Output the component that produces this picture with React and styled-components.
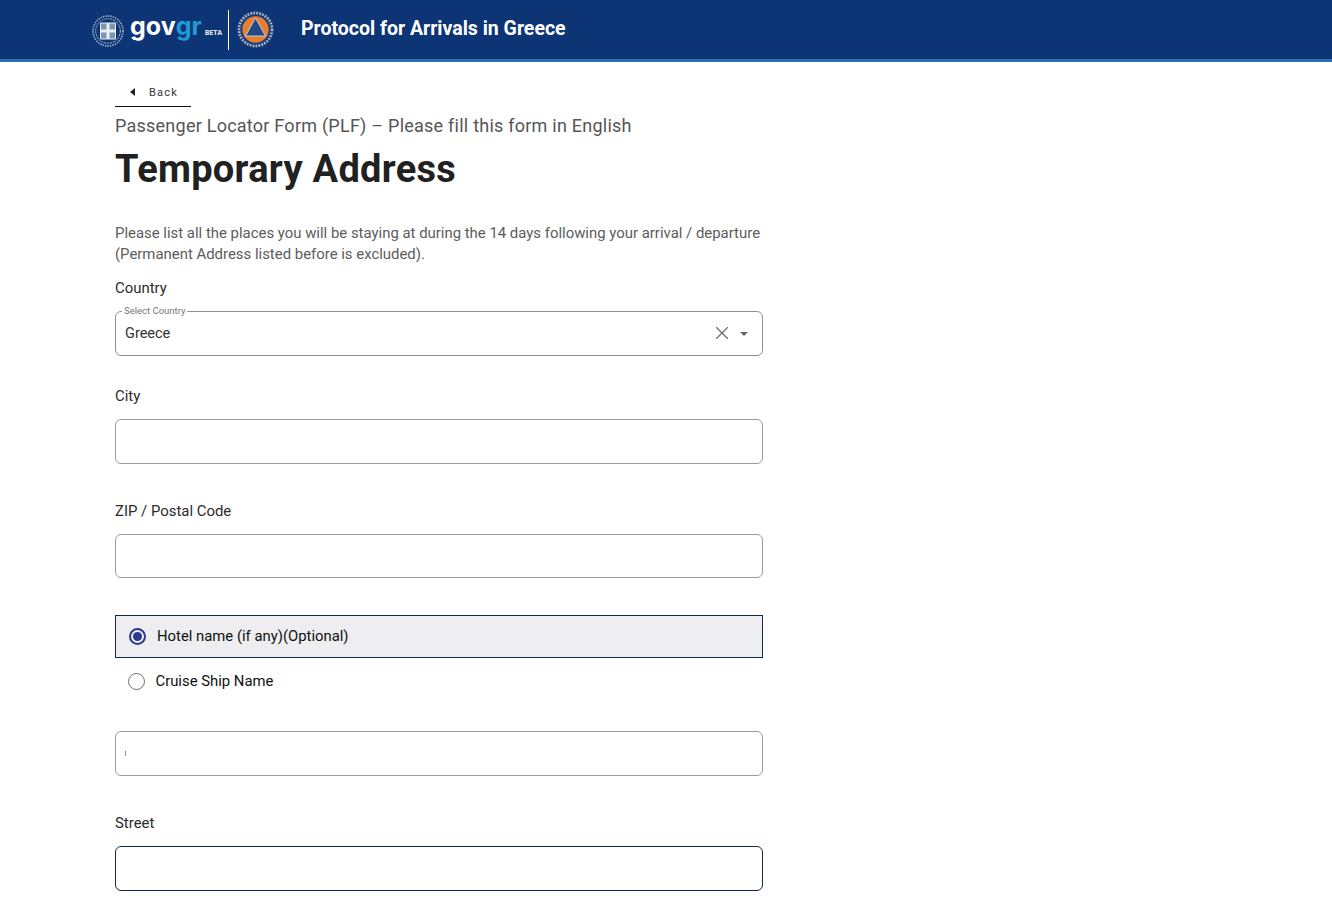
import React from 'react';
import styled, { createGlobalStyle } from 'styled-components';
import { X } from 'lucide-react';

const GlobalStyle = createGlobalStyle`
    html, body {
        margin: 0;
        padding: 0;
        background: #ffffff;
        font-family: Roboto, "Liberation Sans", sans-serif;
    }
`;

const Header = styled.header`
    height: 59px;
    background: #0d3575;
    border-bottom: 3px solid #2a70b8;
    display: flex;
    align-items: center;
    padding-left: 92px;
`;

const EmblemSvg = styled.svg`
    margin-top: 3px;
    flex: none;
`;

const GovWord = styled.div`
    display: flex;
    align-items: baseline;
    width: 88px;
    margin-left: 6px;
    font-family: Inter, Lato, sans-serif;
    font-size: 25px;
    font-weight: 700;
    line-height: 32px;
    color: #ffffff;

    span {
        color: #1f9ad6;
    }

    small {
        margin-left: 3px;
        font-family: "Open Sans", sans-serif;
        font-size: 7px;
        font-weight: 700;
        letter-spacing: 0;
        color: #e8eef6;
    }
`;

const Divider = styled.div`
    width: 1px;
    height: 40px;
    background: #ffffff;
    margin: 0 7px 0 10px;
`;

const HeaderTitle = styled.div`
    margin: -2px 0 0 26px;
    font-size: 19.5px;
    font-weight: 700;
    color: #ffffff;
`;

const Main = styled.main`
    width: 648px;
    margin-left: 115px;
    height: 853px;
    overflow: hidden;
`;

const BackLink = styled.a`
    display: flex;
    align-items: center;
    width: 76px;
    height: 31px;
    margin-top: 14px;
    padding: 2px 0 0 15px;
    box-sizing: border-box;
    border-bottom: 1px solid #111111;
    font-size: 11px;
    letter-spacing: 1.25px;
    color: #333333;

    svg {
        margin-right: 13px;
    }
`;

const Subtitle = styled.div`
    margin-top: 8px;
    font-size: 18px;
    line-height: 22px;
    letter-spacing: 0.24px;
    color: #555555;
`;

const Title = styled.h1`
    margin: 9px 0 0;
    font-size: 38px;
    line-height: 46px;
    font-weight: 700;
    letter-spacing: 0.3px;
    color: #212121;
`;

const Intro = styled.p`
    margin: 31px 0 0;
    font-size: 14.92px;
    line-height: 21px;
    color: #5c5c5c;
`;

const FieldLabel = styled.div`
    font-size: 14.92px;
    line-height: 20px;
    font-weight: 400;
    color: #2b2b2b;
    margin-top: ${props => props.$top}px;
    margin-bottom: ${props => props.$bottom}px;
`;

const SelectBox = styled.fieldset`
    margin: 0;
    height: 50px;
    margin-top: -5px;
    padding: 0 9px 0 9px;
    box-sizing: border-box;
    border: 1px solid #8f8f8f;
    border-radius: 6px;
    display: flex;
    align-items: center;

    legend {
        margin-left: -3px;
        padding: 0 2px;
        font-size: 9.5px;
        line-height: 10px;
        color: #777777;
    }
`;

const SelectRow = styled.div`
    flex: 1;
    display: flex;
    align-items: center;
    margin-top: -5px;
    font-size: 14.5px;
    color: #333333;
`;

const SelectValue = styled.div`
    flex: 1;
`;

const Caret = styled.span`
    width: 0;
    height: 0;
    margin: 1px 5px 0 7.5px;
    border-left: 4.5px solid transparent;
    border-right: 4.5px solid transparent;
    border-top: 4.5px solid #666666;
`;

const TextBox = styled.div`
    height: ${props => props.$height || 45}px;
    box-sizing: border-box;
    border: 1px solid ${props => props.$active ? '#12294f' : '#9a9a9a'};
    border-radius: 6px;
    background: #ffffff;
    display: flex;
    align-items: center;
    padding-left: 9px;
`;

const TextCaret = styled.span`
    width: 1px;
    height: 5px;
    background: #8a8a8a;
`;

const RadioGroup = styled.div`
    margin-top: 37px;
    margin-bottom: 27px;
`;

const RadioRow = styled.label`
    display: flex;
    align-items: center;
    box-sizing: border-box;
    height: ${props => props.$selected ? 43 : 46}px;
    padding-left: ${props => props.$selected ? 13 : 12.5}px;
    background: ${props => props.$selected ? '#eeeef0' : 'transparent'};
    border: ${props => props.$selected ? '1px solid #12294f' : '0'};
    font-size: 14.85px;
    color: #111111;
`;

const RadioText = styled.span`
    margin-top: ${props => props.$on ? -1 : 0}px;
`;

const RadioDot = styled.span`
    width: 17px;
    height: 17px;
    box-sizing: border-box;
    margin-right: 11px;
    border-radius: 50%;
    border: ${props => props.$on ? '2px solid #2b3a8f' : '1.8px solid #6f6f6f'};
    display: flex;
    align-items: center;
    justify-content: center;

    &::after {
        content: "";
        display: ${props => props.$on ? 'block' : 'none'};
        width: 9px;
        height: 9px;
        border-radius: 50%;
        background: #2b3a8f;
    }
`;

const Emblem = () => (
    <EmblemSvg width="32" height="32" viewBox="0 0 32 32">
        <circle cx="16" cy="16" r="15" fill="none" stroke="#8fa3c4" strokeWidth="1.800" strokeDasharray="1.500 1" />
        <circle cx="16" cy="16" r="12.300" fill="none" stroke="#b5c3d9" strokeWidth="1" strokeDasharray="2 1" />
        <rect x="8" y="7.500" width="16" height="17" rx="1" fill="#e9eef5" />
        <rect x="9" y="8.500" width="5.500" height="6" fill="#7f93b5" />
        <rect x="17.500" y="8.500" width="5.500" height="6" fill="#7f93b5" />
        <rect x="9" y="17.500" width="5.500" height="6" fill="#7f93b5" />
        <rect x="17.500" y="17.500" width="5.500" height="6" fill="#7f93b5" />
    </EmblemSvg>
);

const CivilLogo = () => (
    <svg width="39" height="39" viewBox="0 0 39 39">
        <circle cx="19.500" cy="19.500" r="19" fill="#1b3b72" />
        <circle cx="19.500" cy="19.500" r="16.500" fill="none" stroke="#a8b8d2" strokeWidth="2.600" strokeDasharray="1.800 1.200" />
        <circle cx="19.500" cy="19.500" r="13.200" fill="#e67e33" />
        <path d="M19.500 8L29.500 26H9.500z" fill="#1f4a86" stroke="#dbe4f0" strokeWidth="0.800" />
    </svg>
);

const BackArrow = () => (
    <svg width="6" height="8" viewBox="0 0 6 8">
        <path d="M5 0v8L0 4z" fill="#222222" />
    </svg>
);

const App = () => {
    return (
        <>
            <GlobalStyle />
            <Header>
                <Emblem />
                <GovWord>gov<span>gr</span><small>BETA</small></GovWord>
                <Divider />
                <CivilLogo />
                <HeaderTitle>Protocol for Arrivals in Greece</HeaderTitle>
            </Header>
            <Main>
                <BackLink><BackArrow />Back</BackLink>
                <Subtitle>Passenger Locator Form (PLF) – Please fill this form in English</Subtitle>
                <Title>Temporary Address</Title>
                <Intro>
                    Please list all the places you will be staying at during the 14 days following your arrival / departure (Permanent Address listed before is excluded).
                </Intro>

                <FieldLabel $top={13} $bottom={13}>Country</FieldLabel>
                <SelectBox>
                    <legend>Select Country</legend>
                    <SelectRow>
                        <SelectValue>Greece</SelectValue>
                        <X size={22} color="#666666" strokeWidth={1.2} />
                        <Caret />
                    </SelectRow>
                </SelectBox>

                <FieldLabel $top={30} $bottom={13}>City</FieldLabel>
                <TextBox />

                <FieldLabel $top={37} $bottom={13}>ZIP / Postal Code</FieldLabel>
                <TextBox $height={44} />

                <RadioGroup>
                    <RadioRow $selected><RadioDot $on /><RadioText $on>Hotel name (if any)(Optional)</RadioText></RadioRow>
                    <RadioRow><RadioDot /><RadioText>Cruise Ship Name</RadioText></RadioRow>
                </RadioGroup>

                <TextBox><TextCaret /></TextBox>

                <FieldLabel $top={37} $bottom={13}>Street</FieldLabel>
                <TextBox $active />
            </Main>
        </>
    );
};

export default App;
